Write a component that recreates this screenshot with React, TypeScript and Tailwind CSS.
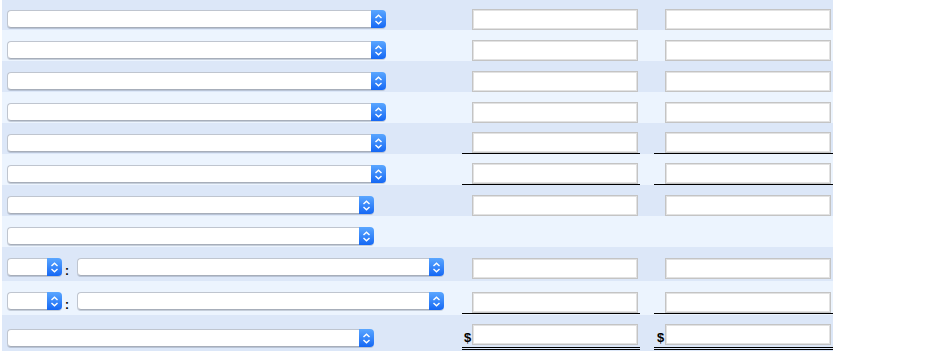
const DARK = 'bg-[#dce7f8]'
const LIGHT = 'bg-[#ecf4fe]'

function Chevrons() {
  return (
    <svg width="7" height="11" viewBox="0 0 7 11" fill="none" stroke="white" strokeWidth="1.4" strokeLinecap="square">
      <path d="M1 3.6 L3.5 1.2 L6 3.6" />
      <path d="M1 7.4 L3.5 9.8 L6 7.4" />
    </svg>
  )
}

function Select({ width }: { width: number }) {
  return (
    <div className="flex h-[18px] shrink-0 rounded-[4px] shadow-[0_1px_0_rgba(80,90,110,0.25)]" style={{ width }}>
      <div className="flex-1 rounded-l-[4px] border border-r-0 border-[#bfc5cf] border-b-[#a7aeba] bg-white" />
      <div className="flex w-[15px] items-center justify-center rounded-r-[4px] bg-gradient-to-b from-[#5aa6ff] to-[#1467f4]">
        <Chevrons />
      </div>
    </div>
  )
}

function Input({ mb = '' }: { mb?: string }) {
  return (
    <div className={`h-[21px] w-[166px] border border-[#c4c4c4] bg-white shadow-[inset_0_0_0_1px_#e2e2e2] ${mb}`} />
  )
}

type Line = 'none' | 'single' | 'double'

function AmountCell({ line, dollar, width, dollarPad }: { line: Line; dollar?: boolean; width: string; dollarPad: string }) {
  const border =
    line === 'single' ? 'border-b border-black' : line === 'double' ? 'border-b-[3px] border-double border-black' : ''
  return (
    <div className={`flex h-full items-end justify-between pr-[2px] ${width} ${border}`}>
      <span className={`mb-[3px] text-[13px] font-bold leading-none text-black ${dollarPad}`}>{dollar ? '$' : ''}</span>
      <Input mb={line === 'double' ? 'mb-[2px]' : ''} />
    </div>
  )
}

interface RowProps {
  bg: string
  h: string
  pt: string
  left: React.ReactNode
  amounts?: boolean
  line?: Line
  dollar?: boolean
  pb?: string
}

function Row({ bg, h, pt, left, amounts = true, line = 'none', dollar, pb = '' }: RowProps) {
  return (
    <div className={`flex w-[831px] ${bg} ${h}`}>
      <div className={`w-[460px] pl-[5px] ${pt}`}>{left}</div>
      {amounts && (
        <div className={`flex h-full ${pb}`}>
          <AmountCell line={line} dollar={dollar} width="w-[178px]" dollarPad="pl-[2px]" />
          <div className="w-[14px]" />
          <AmountCell line={line} dollar={dollar} width="w-[179px]" dollarPad="pl-[3px]" />
        </div>
      )}
    </div>
  )
}

function Pair() {
  return (
    <div className="flex items-end">
      <Select width={55} />
      <span className="-mb-[1px] w-[15px] pl-[3px] text-[12px] font-bold leading-none text-black">:</span>
      <Select width={367} />
    </div>
  )
}

export default function App() {
  return (
    <div className="h-[361px] w-[929px] bg-white font-['Liberation_Sans',Arial,sans-serif]">
      <div className="pl-[2px]">
        <Row bg={DARK} h="h-[30px]" pt="pt-[10px]" left={<Select width={379} />} />
        <Row bg={LIGHT} h="h-[31px]" pt="pt-[11px]" left={<Select width={379} />} />
        <Row bg={DARK} h="h-[31px]" pt="pt-[11px]" left={<Select width={379} />} />
        <Row bg={LIGHT} h="h-[31px]" pt="pt-[11px]" left={<Select width={379} />} />
        <Row bg={DARK} h="h-[31px]" pt="pt-[11px]" left={<Select width={379} />} line="single" />
        <Row bg={LIGHT} h="h-[31px]" pt="pt-[11px]" left={<Select width={379} />} line="single" />
        <Row bg={DARK} h="h-[31px]" pt="pt-[11px]" left={<Select width={367} />} />
        <Row bg={LIGHT} h="h-[31px]" pt="pt-[11px]" left={<Select width={367} />} amounts={false} />
        <Row bg={DARK} h="h-[34px]" pt="pt-[11px]" left={<Pair />} pb="pb-[2px]" />
        <Row bg={LIGHT} h="h-[34px]" pt="pt-[11px]" left={<Pair />} line="single" pb="pb-[1px]" />
        <Row bg={DARK} h="h-[36px]" pt="pt-[14px]" left={<Select width={367} />} line="double" dollar pb="pb-[1px]" />
      </div>
    </div>
  )
}
